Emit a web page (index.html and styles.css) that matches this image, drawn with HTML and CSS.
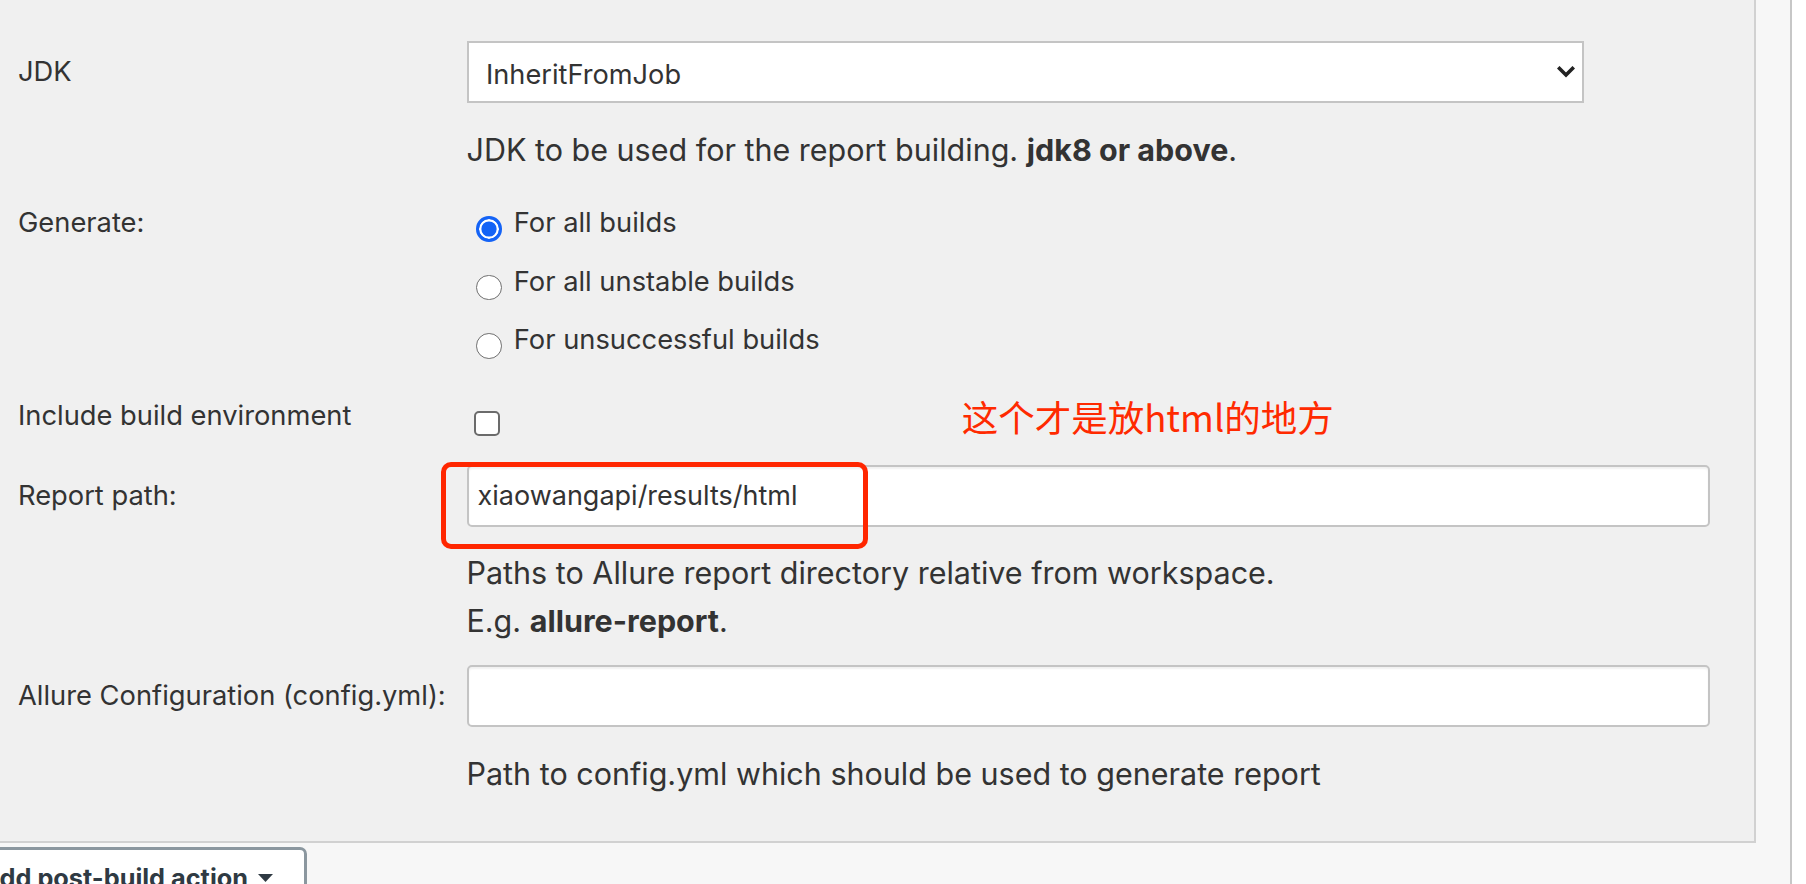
FILE: index.html
```html
<!DOCTYPE html>
<html lang="en">
<head>
<meta charset="utf-8">
<title>Allure Report</title>
<link rel="stylesheet" href="styles.css">
</head>
<body>
<div class="page">
  <div class="panel">
    <div class="row">
      <div class="label">JDK</div>
      <div class="ctrl">
        <div class="select">
          <span class="select-text">InheritFromJob</span>
          <svg class="chevron" width="18" height="12" viewBox="0 0 18 12"><polyline points="2.5,2.5 9,9 15.5,2.5" fill="none" stroke="#222" stroke-width="3.6" stroke-linecap="square"/></svg>
        </div>
        <div class="help help-first">JDK to be used for the report building. <b>jdk8 or above</b>.</div>
      </div>
    </div>

    <div class="row row-generate">
      <div class="label plain">Generate:</div>
      <div class="ctrl">
        <div class="opt"><span class="radio checked"></span><span>For all builds</span></div>
        <div class="opt"><span class="radio"></span><span>For all unstable builds</span></div>
        <div class="opt"><span class="radio"></span><span>For unsuccessful builds</span></div>
      </div>
    </div>

    <div class="row row-env">
      <div class="label plain">Include build environment</div>
      <div class="ctrl"><span class="checkbox"></span></div>
    </div>

    <div class="row row-path">
      <div class="label">Report path:</div>
      <div class="ctrl">
        <div class="input">xiaowangapi/results/html</div>
        <div class="help">Paths to Allure report directory relative from workspace.<br>E.g. <b>allure-report</b>.</div>
      </div>
    </div>

    <div class="row row-config">
      <div class="label">Allure Configuration (config.yml):</div>
      <div class="ctrl">
        <div class="input"></div>
        <div class="help help-last">Path to config.yml which should be used to generate report</div>
      </div>
    </div>

    <div class="note">这个才是放html的地方</div>
    <div class="mark"></div>
  </div>

  <div class="actions">
    <div class="btn"><span>Add post-build action</span><svg width="15" height="8" viewBox="0 0 15 8"><polygon points="0,0 15,0 7.5,8" fill="#2f3a43"/></svg></div>
  </div>
</div>
</body>
</html>
```

FILE: styles.css
```css
html, body {
  margin: 0;
  padding: 0;
}

body {
  background: #ffffff;
  font-family: Inter, "Noto Sans", "Liberation Sans", sans-serif;
  color: #333333;
  overflow: hidden;
}

.page {
  width: 1790px;
  height: 884px;
  border-right: 2px solid #c7c7c7;
  background: #f7f7f7;
  overflow: hidden;
}

.panel {
  position: relative;
  width: 1756px;
  box-sizing: border-box;
  padding: 41px 44.5px 42.5px 18px;
  background: #f0f0f0;
  border-right: 2px solid #d1d1d1;
  border-bottom: 2px solid #d1d1d1;
}

.row {
  display: grid;
  grid-template-columns: 448.5px 1fr;
  align-items: start;
}

.label {
  font-size: 27.3px;
  line-height: 36px;
  padding-top: 13.4px;
  white-space: nowrap;
}

.label.plain {
  padding-top: 0;
}

.select {
  width: 1117px;
  height: 62px;
  box-sizing: border-box;
  border: 2px solid #c4c4c4;
  background: #ffffff;
  display: flex;
  align-items: center;
  justify-content: space-between;
  padding: 0 7px 0 17.5px;
}

.select-text {
  font-size: 27.2px;
  line-height: 36px;
  padding-top: 6px;
}

.chevron {
  display: block;
}

.help {
  font-size: 30.5px;
  line-height: 48.5px;
  margin-top: 22px;
  white-space: nowrap;
}

.help.help-first {
  margin-top: 23.3px;
}

.help.help-last {
  margin-top: 23.5px;
}

.help b {
  font-weight: 700;
}

.row-generate {
  margin-top: 30.5px;
}

.opt {
  display: flex;
  align-items: flex-start;
  font-size: 27.3px;
  line-height: 36px;
  margin-bottom: 21.7px;
}

.opt:last-child {
  margin-bottom: 0;
}

.radio {
  flex-shrink: 0;
  width: 25.7px;
  height: 25.7px;
  box-sizing: border-box;
  border-radius: 50%;
  border: 1.6px solid #6f6f6f;
  background: #ffffff;
  margin: 11px 12px 0 9.6px;
}

.radio.checked {
  border: 3px solid #1463f6;
  background: #1463f6;
  box-shadow: inset 0 0 0 2.4px #ffffff;
}

.row-env {
  margin-top: 39px;
}

.checkbox {
  display: block;
  width: 25.5px;
  height: 25.5px;
  box-sizing: border-box;
  border: 2px solid #6b6b6b;
  border-radius: 5px;
  background: #ffffff;
  margin: 13px 0 0 7.8px;
}

.row-path {
  margin-top: 28.4px;
}

.row-config {
  margin-top: 19px;
}

.input {
  height: 62px;
  box-sizing: border-box;
  border: 2px solid #c4c4c4;
  border-radius: 5px;
  background: #ffffff;
  box-shadow: inset 0 2px 2px rgba(0, 0, 0, 0.06);
  display: flex;
  align-items: center;
  padding-left: 9px;
  font-size: 27px;
  line-height: 36px;
}

.note {
  position: absolute;
  left: 961.7px;
  top: 399px;
  font-family: "Noto Sans CJK SC", "Noto Sans", sans-serif;
  font-size: 36.5px;
  line-height: 36px;
  color: #ff2a00;
  white-space: nowrap;
}

.mark {
  position: absolute;
  left: 441px;
  top: 461.7px;
  width: 426.7px;
  height: 87.3px;
  box-sizing: border-box;
  border: 5px solid #ff2600;
  border-radius: 10px;
}

.actions {
  display: flex;
  justify-content: flex-end;
  width: 306.7px;
  margin-top: 4px;
}

.btn {
  flex-shrink: 0;
  display: flex;
  align-items: center;
  gap: 10px;
  border: 3px solid #8b979f;
  border-radius: 7px;
  background: #ffffff;
  padding: 10px 30.7px 20px 20px;
  font-size: 25.3px;
  line-height: 36px;
  font-weight: 700;
  color: #2f3a43;
  white-space: nowrap;
}

.btn svg {
  display: block;
}
```
